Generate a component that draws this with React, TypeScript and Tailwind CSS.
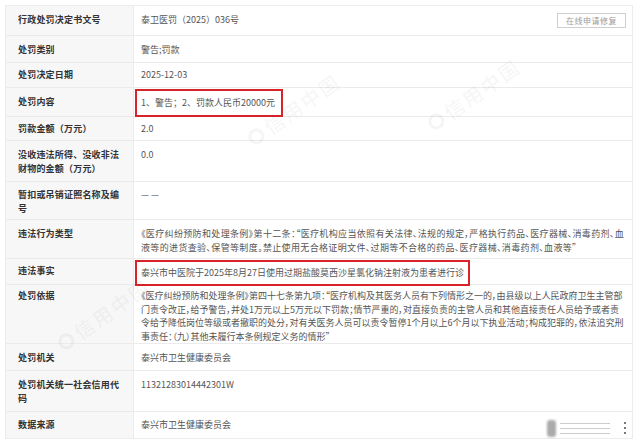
import React from 'react';

type Row = {
  label: string[];
  h: string;
  pt: string;
  value: React.ReactNode;
};

const boxed = (text: string, cls: string) => (
  <span className={`inline-block border-2 border-[#d8232a] whitespace-nowrap ${cls}`}>{text}</span>
);

const rows: Row[] = [
  { label: ['行政处罚决定书文号'], h: 'h-[29px]', pt: 'pt-[7px]', value: '泰卫医罚（2025）036号' },
  { label: ['处罚类别'], h: 'h-[27px]', pt: 'pt-[7px]', value: '警告;罚款' },
  { label: ['处罚决定日期'], h: 'h-[25px]', pt: 'pt-[5px]', value: '2025-12-03' },
  {
    label: ['处罚内容'],
    h: 'h-[29px]',
    pt: 'pt-[7px]',
    value: boxed('1、警告；2、罚款人民币20000元', '-ml-[6px] -mt-[6px] pl-[4px] pr-[6px] py-[5px]'),
  },
  { label: ['罚款金额（万元）'], h: 'h-[24px]', pt: 'pt-[5px]', value: '2.0' },
  { label: ['没收违法所得、没收非法', '财物的金额（万元）'], h: 'h-[41px]', pt: 'pt-[7px]', value: '0.0' },
  { label: ['暂扣或吊销证照名称及编', '号'], h: 'h-[38px]', pt: 'pt-[6px]', value: '— —' },
  {
    label: ['违法行为类型'],
    h: 'h-[39px]',
    pt: 'pt-[7px]',
    value: (
      <div className="[font-feature-settings:'palt'] tracking-[0.35px]">
        <div className="whitespace-nowrap">《医疗纠纷预防和处理条例》第十二条：“医疗机构应当依照有关法律、法规的规定，严格执行药品、医疗器械、消毒药剂、血</div>
        <div className="whitespace-nowrap">液等的进货查验、保管等制度。禁止使用无合格证明文件、过期等不合格的药品、医疗器械、消毒药剂、血液等”</div>
      </div>
    ),
  },
  {
    label: ['违法事实'],
    h: 'h-[26px]',
    pt: 'pt-[5px]',
    value: boxed('泰兴市中医院于2025年8月27日使用过期盐酸莫西沙星氯化钠注射液为患者进行诊', '-ml-[6px] -mt-[4px] pl-[4px] pr-[4px] py-[4px]'),
  },
  {
    label: ['处罚依据'],
    h: 'h-[59px]',
    pt: 'pt-[4px]',
    value: (
      <div className="[font-feature-settings:'palt']">
        <div className="whitespace-nowrap">《医疗纠纷预防和处理条例》第四十七条第九项：“医疗机构及其医务人员有下列情形之一的，由县级以上人民政府卫生主管部</div>
        <div className="whitespace-nowrap">门责令改正，给予警告，并处1万元以上5万元以下罚款；情节严重的，对直接负责的主管人员和其他直接责任人员给予或者责</div>
        <div className="whitespace-nowrap">令给予降低岗位等级或者撤职的处分，对有关医务人员可以责令暂停1个月以上6个月以下执业活动；构成犯罪的，依法追究刑</div>
        <div className="whitespace-nowrap">事责任：（九）其他未履行本条例规定义务的情形”</div>
      </div>
    ),
  },
  { label: ['处罚机关'], h: 'h-[27px]', pt: 'pt-[7px]', value: '泰兴市卫生健康委员会' },
  { label: ['处罚机关统一社会信用代', '码'], h: 'h-[41px]', pt: 'pt-[7px]', value: '11321283014442301W' },
  { label: ['数据来源'], h: 'h-[27px]', pt: 'pt-[6px]', value: '泰兴市卫生健康委员会' },
];

function Watermark({ cls }: { cls: string }) {
  return (
    <div className={`absolute pointer-events-none flex items-center gap-[4px] -rotate-[35deg] text-[#000]/[0.04] ${cls}`}>
      <span className="inline-block w-[16px] h-[16px] rounded-full border-[3px] border-[#000]/[0.04]" />
      <span className="text-[20px] font-bold tracking-[2px]">信用中国</span>
    </div>
  );
}

export default function App() {
  return (
    <div
      className="relative w-[640px] h-[448px] overflow-hidden bg-white pl-[5px] pr-[7px] pt-[5px]"
      style={{ fontFamily: '"Noto Sans CJK SC", "Noto Sans", sans-serif' }}
    >
      <div className="border border-[#ececec] text-[9px] leading-[13.5px]">
        {rows.map((r, i) => (
          <div key={i} className={`flex ${r.h} ${i > 0 ? 'border-t border-[#ebebeb]' : ''}`}>
            <div className={`w-[128px] shrink-0 bg-[#f7f7f7] border-r border-[#ebebeb] px-[12px] font-bold text-[#333] tracking-[0.2px] ${r.pt}`}>
              {r.label.map((l, j) => (
                <div key={j}>{l}</div>
              ))}
            </div>
            <div className={`relative flex-1 pl-[7px] pr-[4px] text-[#555] ${r.pt}`}>
              {r.value}
              {i === 0 && (
                <span className="absolute right-[6px] top-[7px] border border-[#cfcfcf] px-[8px] text-[8px] leading-[13px] text-[#9a9a9a] tracking-[0.5px]">
                  在线申请修复
                </span>
              )}
            </div>
          </div>
        ))}
      </div>

      <Watermark cls="left-[420px] top-[80px]" />
      <Watermark cls="left-[240px] top-[95px]" />
      <Watermark cls="left-[50px] top-[300px]" />

      {/* faint mark bottom right */}
      <div className="absolute left-[547px] top-[420px] w-[9px] h-[17px] rounded-[3px] bg-[#888] blur-[1px] opacity-70" />
      <div className="absolute left-[560px] top-[423px] w-[50px] h-[1px] bg-[#ccc]" />
      <div className="absolute left-[560px] top-[428px] w-[50px] h-[1px] bg-[#ccc]" />
      <div className="absolute left-[560px] top-[433px] w-[50px] h-[1px] bg-[#ccc]" />
      <div className="absolute left-[624px] top-[422px] w-[2px] h-[2px] bg-[#777]" />
      <div className="absolute left-[624px] top-[427px] w-[2px] h-[2px] bg-[#777]" />
      <div className="absolute left-[624px] top-[432px] w-[2px] h-[2px] bg-[#777]" />
    </div>
  );
}
